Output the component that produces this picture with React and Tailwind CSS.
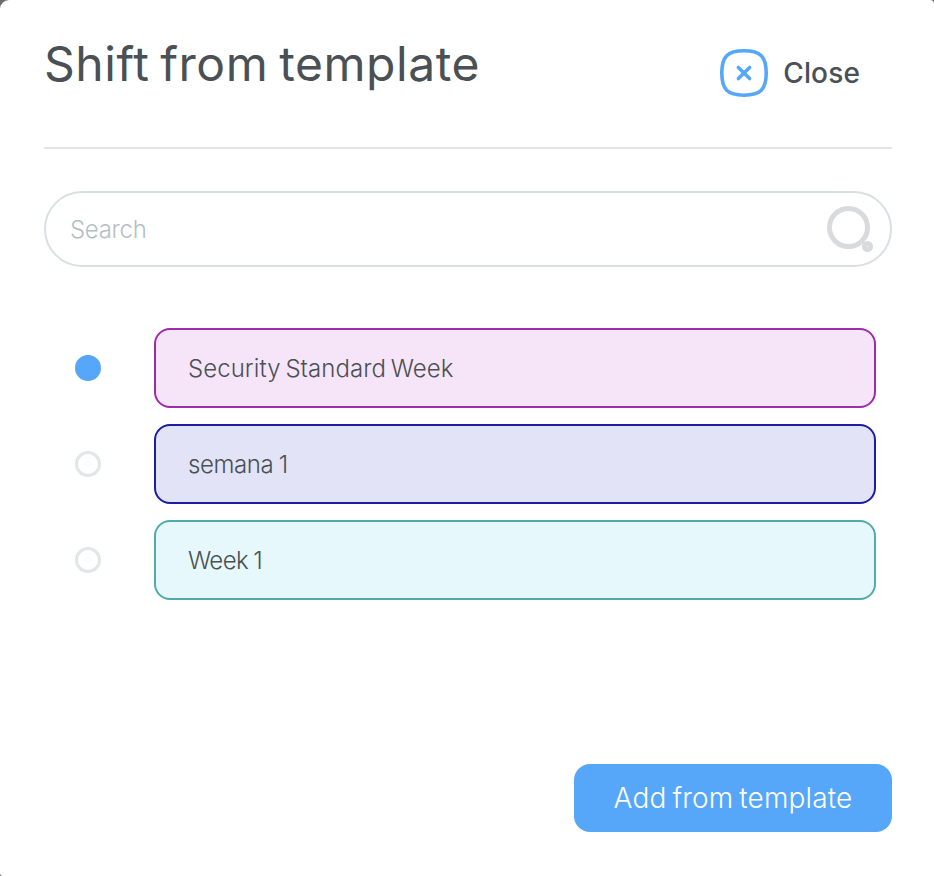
import { useState } from 'react';

const templates = [
  { id: 1, name: 'Security Standard Week', color: 'border-[#9f2bad] bg-[#f6e5f8]', spacing: 'tracking-[0.06px] [word-spacing:-2px]' },
  { id: 2, name: 'semana 1', color: 'border-[#1c1ca5] bg-[#e2e3f6]', spacing: 'tracking-[-0.4px] [word-spacing:-1px]' },
  { id: 3, name: 'Week 1', color: 'border-[#51abaa] bg-[#e6f8fb]', spacing: 'tracking-[-0.6px] [word-spacing:-1px]' },
];

function CloseIcon() {
  return (
    <svg width="48" height="48" viewBox="0 0 48 48" fill="none" stroke="#56a6f9">
      <path
        d="M24 1.800C40.500 1.800 46.200 7.500 46.200 24C46.200 40.500 40.500 46.200 24 46.200C7.500 46.200 1.800 40.500 1.800 24C1.800 7.500 7.500 1.800 24 1.800Z"
        strokeWidth="3.600"
      />
      <path d="M18.400 18.400L29.600 29.600M29.600 18.400L18.400 29.600" strokeWidth="3.600" strokeLinecap="round" />
    </svg>
  );
}

function SearchIcon() {
  return (
    <svg width="48" height="48" viewBox="0 0 48 48" fill="none" stroke="#d9dade">
      <circle cx="22.500" cy="22.500" r="19" strokeWidth="5" />
      <circle cx="41.500" cy="41.500" r="3.100" strokeWidth="5" />
    </svg>
  );
}

export default function App() {
  const [selected, setSelected] = useState(1);
  const [search, setSearch] = useState('');

  return (
    <div className="h-[876px] w-[934px] bg-[#6b6b6b] font-['Inter',sans-serif] text-[#4a5053]">
      <div className="flex h-full flex-col rounded-tl-[9px] rounded-tr-[4px] rounded-bl-[3px] bg-white pr-[42px] pl-11">
        {/* Header */}
        <div className="flex h-[149px] shrink-0 items-start justify-between border-b-2 border-[#e5e5e5] pr-8">
          <h1 className="mt-[34px] text-[48px] leading-[60px] tracking-[0.55px] whitespace-nowrap [word-spacing:-3.200px]">
            Shift from template
          </h1>
          <button className="mt-[49px] flex h-12 items-center gap-[15px]">
            <CloseIcon />
            <span className="text-[28px] font-[460] tracking-[0.15px]">Close</span>
          </button>
        </div>

        {/* Search */}
        <div className="mt-[42px] flex h-[76px] shrink-0 items-center rounded-full border-2 border-[#d9dfe3] pr-4 pl-6">
          <input
            type="text"
            value={search}
            onChange={(e) => setSearch(e.target.value)}
            className="min-w-0 flex-1 pt-0.5 text-[24px] font-light tracking-[-0.3px] outline-none placeholder:text-[#b4bfc4]"
            placeholder="Search"
          />
          <SearchIcon />
        </div>

        {/* Template list */}
        <ul className="mt-[61px] space-y-4 pr-4">
          {templates.map((template) => (
            <li key={template.id} className="flex items-center pl-[31px]">
              <button
                onClick={() => setSelected(template.id)}
                className={`mr-[53px] size-[26px] shrink-0 rounded-full border-[3px] ${
                  template.id === selected ? 'border-[#56a6f9] bg-[#56a6f9]' : 'border-[#e1e6ea]'
                }`}
                aria-label={template.name}
              />
              <div className={`flex h-20 flex-1 items-center rounded-2xl border-2 px-8 pt-0.5 ${template.color}`}>
                <span className={`text-[24px] font-[350] ${template.spacing}`}>{template.name}</span>
              </div>
            </li>
          ))}
        </ul>

        <button className="mt-auto mb-11 h-[68px] w-[318px] shrink-0 self-end rounded-2xl bg-[#56a6f9] text-[28px] font-[350] tracking-[0.15px] text-white [word-spacing:-2px]">
          Add from template
        </button>
      </div>
    </div>
  );
}
